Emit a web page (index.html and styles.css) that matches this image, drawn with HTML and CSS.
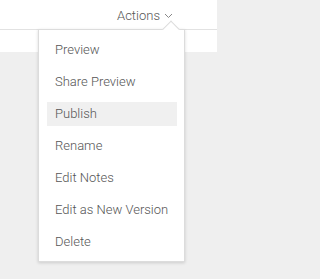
FILE: index.html
```html
<!DOCTYPE html>
<html>
<head>
<meta charset="utf-8">
<link rel="stylesheet" href="styles.css">
</head>
<body>
<div class="page">
  <header class="topbar">
    <button class="actions">Actions
      <svg class="chev" width="9" height="6" viewBox="0 0 9 6"><path d="M1 1 L4.5 4.5 L8 1" fill="none" stroke="#888" stroke-width="1"/></svg>
    </button>
  </header>
  <div class="subbar"></div>
  <div class="content"></div>
  <div class="menu">
    <span class="arrow"></span>
    <ul class="items">
      <li class="item">Preview</li>
      <li class="item">Share Preview</li>
      <li class="item active">Publish</li>
      <li class="item">Rename</li>
      <li class="item">Edit Notes</li>
      <li class="item">Edit as New Version</li>
      <li class="item">Delete</li>
    </ul>
  </div>
</div>
</body>
</html>
```

FILE: styles.css
```css
html, body {
  margin: 0;
  padding: 0;
  background: #efefef;
  font-family: Roboto, "Liberation Sans", sans-serif;
}
.page {
  position: relative;
  width: 217px;
  height: 279px;
  overflow: hidden;
  display: flex;
  flex-direction: column;
}
.topbar {
  height: 29px;
  background: #fff;
  border-bottom: 1px solid #e2e2e2;
  display: flex;
  justify-content: flex-end;
  align-items: center;
  padding-right: 44px;
}
.actions {
  border: 0;
  background: none;
  padding: 0;
  font-family: inherit;
  font-size: 13px;
  font-weight: 300;
  color: #555;
  display: flex;
  align-items: center;
  gap: 4px;
  margin-top: 1px;
}
.chev { margin-top: 2px; }
.subbar {
  height: 22px;
  background: #fff;
}
.content { flex: 1; }
.menu {
  position: absolute;
  left: 38px;
  top: 29px;
  width: 145px;
  background: #fff;
  border: 1px solid #dcdcdc;
  box-shadow: 0 1px 3px rgba(0,0,0,0.15);
}
.arrow {
  position: absolute;
  right: 7px;
  top: -7px;
  width: 11px;
  height: 11px;
  background: #fff;
  border-left: 1px solid #dcdcdc;
  border-top: 1px solid #dcdcdc;
  transform: rotate(45deg);
}
.items {
  list-style: none;
  margin: 0;
  padding: 8px 7px 7px 8px;
  display: flex;
  flex-direction: column;
  gap: 8px;
  position: relative;
}
.item {
  height: 24px;
  line-height: 24px;
  padding-left: 8px;
  font-size: 13px;
  font-weight: 300;
  color: #555;
  white-space: nowrap;
}
.item.active { background: #f0f0f0; }
```
